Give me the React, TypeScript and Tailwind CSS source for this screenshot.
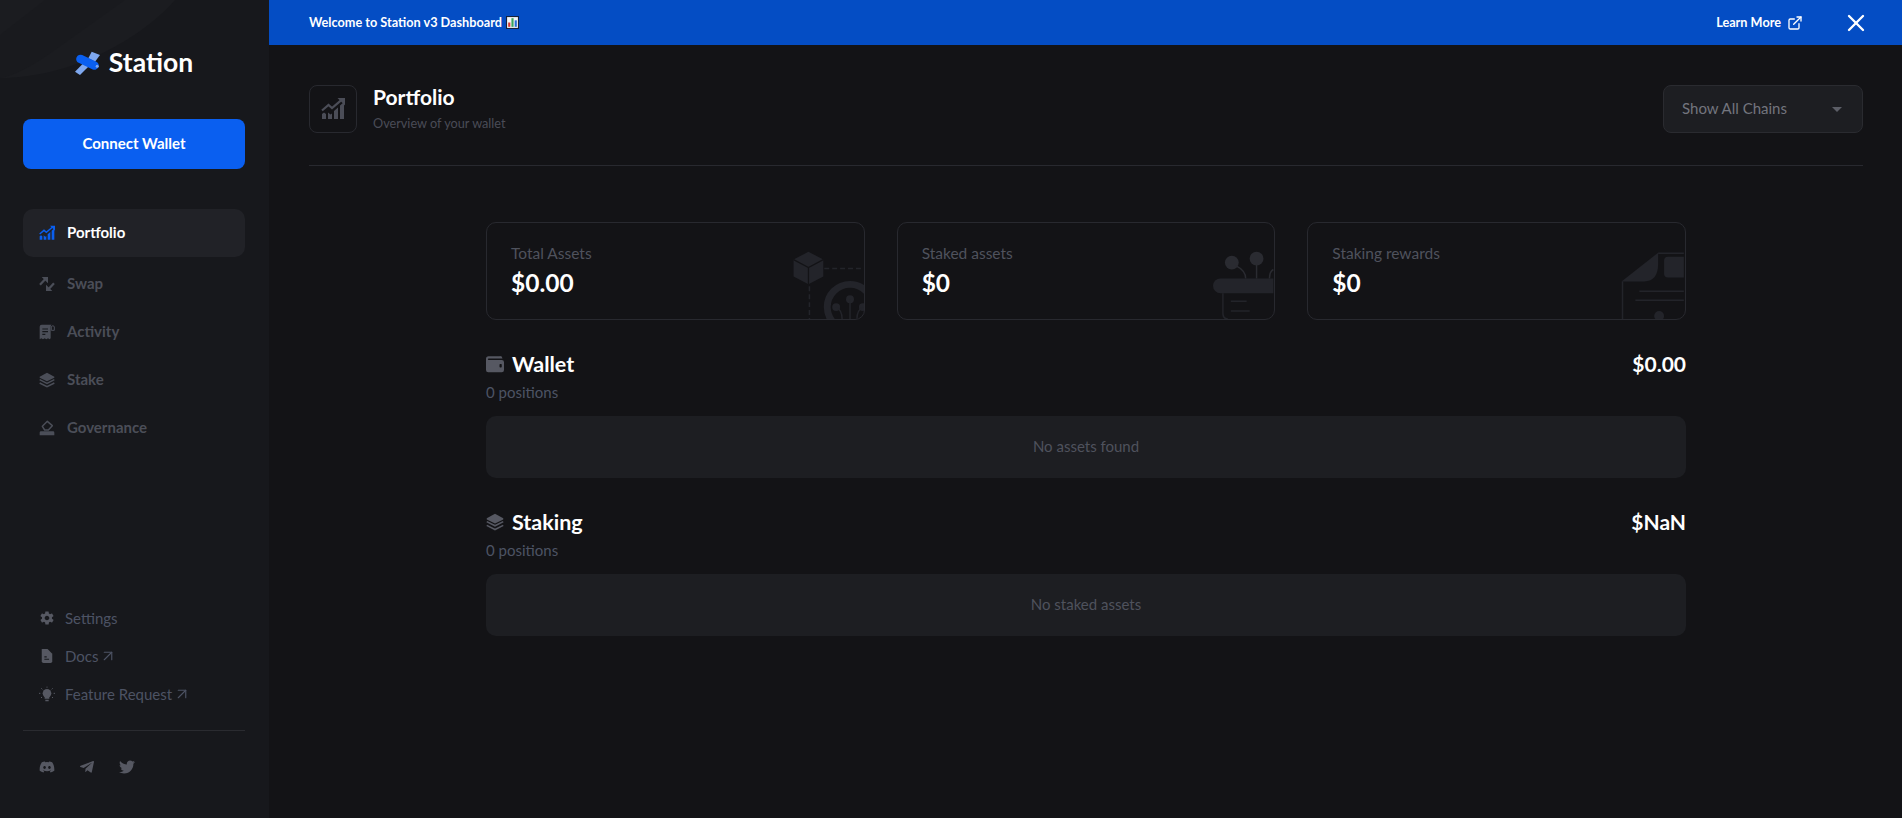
import { ArrowUpRight, ExternalLink, X } from 'lucide-react';
import { FaDiscord, FaTelegramPlane, FaTwitter } from 'react-icons/fa';
import { IoMdSettings } from 'react-icons/io';

const font = "font-['Lato','Liberation_Sans',sans-serif]";

function ChartIcon({ className }: { className?: string }) {
  return (
    <svg viewBox="0 0 24 24" className={className} fill="currentColor">
      <path d="M1 22v-5l2-1.500 2 1.500v5H1ZM7 22v-6.500l2.500 2 1.500-1V22H7ZM13 22v-8l4-3.500V22h-4ZM19 22V8.500l4-3.500v17h-4Z" />
      <path d="M1 13.500 7.500 8l3.500 3L20 3.300" fill="none" stroke="currentColor" strokeWidth="2.200" />
      <path d="M16.500 1H24v7.500Z" />
    </svg>
  );
}

function SwapIcon({ className }: { className?: string }) {
  return (
    <svg viewBox="0 0 24 24" className={className} fill="currentColor">
      <path d="M1.500 13 9.500 4.500M22.500 11 14.500 19.500" fill="none" stroke="currentColor" strokeWidth="3.400" />
      <path d="M4 1.500h9.500V11ZM10.500 13v9.500H20Z" />
    </svg>
  );
}

function ReceiptIcon({ className }: { className?: string }) {
  return (
    <svg viewBox="0 0 24 24" className={className} fill="currentColor">
      <path d="M1 4a3 3 0 0 1 3-3h15a3.500 3.500 0 0 0-1.500 3v17.500l-1.500 1.500-2.500-1.500-2.500 1.500-2.500-1.500L6 23l-2.500-1.500L1 23V4Z" />
      <path d="M5 7.500h8.500M5 11.500h8.500M5 15.500h4.500" stroke="#17181c" strokeWidth="1.800" />
      <path d="M18.500 9.500V4.500a2.300 2.300 0 0 1 4.500 0v5h-4.500Z" fill="none" stroke="currentColor" strokeWidth="1.500" />
    </svg>
  );
}

function LayersIcon({ className }: { className?: string }) {
  return (
    <svg viewBox="0 0 24 24" className={className} fill="currentColor">
      <path d="M12 1 23 7v1.500L12 14 1 8.500V7L12 1Z" />
      <path d="M1 11.500 12 17l11-5.500M1 16.500 12 22l11-5.500" fill="none" stroke="currentColor" strokeWidth="2.200" />
    </svg>
  );
}

function VoteIcon({ className }: { className?: string }) {
  return (
    <svg viewBox="0 0 24 24" className={className} fill="currentColor">
      <path d="M12.500 2 20 8.500 14 15H8.500L5 9.500Z" fill="none" stroke="currentColor" strokeWidth="2.200" strokeLinejoin="round" />
      <path d="M1 19a2 2 0 0 1 2-2h18a2 2 0 0 1 2 2v4H1v-4Z" />
    </svg>
  );
}

function DocIcon({ className }: { className?: string }) {
  return (
    <svg viewBox="0 0 24 24" className={className} fill="currentColor">
      <path d="M4 0h9l8 8v13a3 3 0 0 1-3 3H6a3 3 0 0 1-3-3V1a1 1 0 0 1 1-1Z" />
      <path d="M7.500 13.500h4M7.500 17.500h8" stroke="#17181c" strokeWidth="1.800" />
    </svg>
  );
}

function BulbIcon({ className }: { className?: string }) {
  return (
    <svg viewBox="0 0 24 24" className={className} fill="currentColor">
      <circle cx="12" cy="11" r="6.500" />
      <path d="M8.500 16h7v3h-7ZM9.500 20.500h5V23h-5Z" />
      <path d="M12 1v1.500M3.500 3.500l1.500 1.500M20.500 3.500 19 5M0 11h2M22 11h2M3 18l1.500-1.500M21 18l-1.500-1.500" stroke="currentColor" strokeWidth="1.500" fill="none" />
    </svg>
  );
}

function WalletIcon({ className }: { className?: string }) {
  return (
    <svg viewBox="0 0 24 24" className={className} fill="currentColor">
      <path d="M0 5a3.500 3.500 0 0 1 3.500-3.500h15A3.500 3.500 0 0 1 22 4.500H3.500a1 1 0 0 0 0 2H21a3 3 0 0 1 3 3V20a3 3 0 0 1-3 3H3a3 3 0 0 1-3-3V5Z" />
      <rect x="18" y="12" width="3" height="4.500" rx="1" fill="#131316" />
    </svg>
  );
}

function SatelliteLogo() {
  return (
    <svg viewBox="0 0 25 25" className="h-[25px] w-[25px]">
      <path d="M0 21.700 8.300 13.300l5 3.400L5 25Z" fill="#7fa8ef" />
      <path d="M16.700 1.700 25 5l-5 6.700-6.700-3.400Z" fill="#7fa8ef" />
      <rect x="0.500" y="8" width="24" height="8.500" rx="4.200" transform="rotate(25 12.500 12.200)" fill="#0a5ff0" />
      <circle cx="22.200" cy="16.300" r="1.500" fill="#7fa8ef" />
    </svg>
  );
}

function AssetsArt() {
  return (
    <svg viewBox="0 0 379 97" className="absolute inset-0 h-full w-full" fill="none">
      <path d="M324 29 339 37v17l-15 8-15-8V37Z" fill="#23242a" />
      <path d="M309 37l15 8 15-8M324 45v17" stroke="#131316" strokeWidth="1.200" />
      <path d="M340 46h39M325 64v33" stroke="#23242a" strokeWidth="1.500" strokeDasharray="5 3" />
      <circle cx="366" cy="85" r="23" stroke="#23242a" strokeWidth="7" />
      <circle cx="352" cy="85" r="4" fill="#23242a" />
      <circle cx="366" cy="77" r="4" fill="#23242a" />
      <circle cx="379" cy="85" r="4" fill="#23242a" />
      <path d="M352 85c4 2 6 5 6 12M366 77v20M379 85c-4 2-6 5-6 12" stroke="#23242a" strokeWidth="1.500" />
    </svg>
  );
}

function StakedArt() {
  return (
    <svg viewBox="0 0 378 97" className="absolute inset-0 h-full w-full" fill="none">
      <circle cx="336" cy="40" r="7" fill="#2a2b31" />
      <circle cx="361" cy="36" r="7" fill="#2a2b31" />
      <path d="M340 43c6 3 10 7 10 13M361 42v14M374 56c0-5 2-8 4-9" stroke="#2a2b31" strokeWidth="1.500" />
      <path d="M324.500 56H378v15h-53.500a7.500 7.500 0 0 1 0-15Z" fill="#23242a" />
      <path d="M327 71v20q0 6 5 6" stroke="#23242a" strokeWidth="1.500" />
      <path d="M335 79h16M335 89h19" stroke="#23242a" strokeWidth="1.500" />
    </svg>
  );
}

function RewardsArt() {
  return (
    <svg viewBox="0 0 379 97" className="absolute inset-0 h-full w-full" fill="none">
      <path d="M316 59 353 30v11q0 18-14 18Z" fill="#23242a" />
      <path d="M353 30.500h26M317 59v38" stroke="#23242a" strokeWidth="1.500" />
      <path d="M363 34h16v21h-16a4 4 0 0 1-4-4V38a4 4 0 0 1 4-4Z" fill="#23242a" />
      <path d="M334 69h45M330 78h49" stroke="#23242a" strokeWidth="1.500" />
      <circle cx="354" cy="94" r="5" fill="#23242a" />
    </svg>
  );
}

const navItems = [
  { label: 'Swap', icon: SwapIcon },
  { label: 'Activity', icon: ReceiptIcon },
  { label: 'Stake', icon: LayersIcon },
  { label: 'Governance', icon: VoteIcon },
];

function Sidebar() {
  return (
    <aside className="relative flex h-full w-[269px] shrink-0 flex-col overflow-hidden bg-[#17181c] pb-[43px] pl-[23px] pr-6 pt-[50px]">
      {/* faint background shape */}
      <svg viewBox="0 0 180 80" className="absolute left-0 top-0 h-[80px] w-[180px]" fill="none">
        <path d="M0 78C70 78 140 40 175 0H0Z" fill="#1b1c20" />
        <path d="M0 35 45 0H125L55 50Q20 75 0 78Z" fill="#191a1e" />
      </svg>

      <div className="relative flex h-[25px] items-center justify-center gap-[9px]">
        <SatelliteLogo />
        <span className="text-[26.500px] font-bold leading-none text-white">Station</span>
      </div>

      <button className="relative mt-[44px] h-[50px] rounded-lg bg-[#0a5ff0] pb-[2px] text-[15px] font-bold text-white">Connect Wallet</button>

      <nav className="mt-[40px] flex flex-col">
        <div className="mb-[3px] flex h-[48px] items-center gap-3 rounded-[10px] bg-[#212227] px-4">
          <ChartIcon className="h-4 w-4 text-[#0a5ff0]" />
          <span className="pb-[2px] text-[15px] font-bold text-white">Portfolio</span>
        </div>
        {navItems.map((item) => (
          <div key={item.label} className="flex h-[48px] items-center gap-3 px-4 text-[#4b4e58]">
            <item.icon className="h-4 w-4" />
            <span className="pb-[2px] text-[15px] font-bold">{item.label}</span>
          </div>
        ))}
      </nav>

      <div className="mt-auto flex flex-col px-4 text-[15px] text-[#4d5364]">
        <div className="flex h-[38px] items-center gap-[10px]">
          <IoMdSettings className="h-4 w-4 text-[#565862]" />
          <span>Settings</span>
        </div>
        <div className="flex h-[38px] items-center gap-[10px]">
          <DocIcon className="h-[14px] w-4 text-[#565862]" />
          <span>Docs</span>
          <ArrowUpRight className="-ml-[9px] h-[18px] w-[18px]" strokeWidth={1.500} />
        </div>
        <div className="flex h-[38px] items-center gap-[10px]">
          <BulbIcon className="h-4 w-4 text-[#565862]" />
          <span>Feature Request</span>
          <ArrowUpRight className="-ml-[9px] h-[18px] w-[18px]" strokeWidth={1.500} />
        </div>
      </div>

      <div className="mt-[17px] border-t border-[#2a2b30]" />

      <div className="mt-[28px] flex gap-6 px-4 text-[#565862]">
        <FaDiscord className="h-4 w-4" />
        <FaTelegramPlane className="h-4 w-4" />
        <FaTwitter className="h-4 w-4" />
      </div>
    </aside>
  );
}

function StatCard({ label, value, art }: { label: string; value: string; art: React.ReactNode }) {
  return (
    <div className="relative h-[98px] overflow-hidden rounded-[10px] border border-[#28292f] px-6 pt-5">
      {art}
      <div className="relative text-[15.500px] leading-5 text-[#4f525d]">{label}</div>
      <div className="relative mt-[5px] text-[24.500px] font-bold leading-[30px] text-white">{value}</div>
    </div>
  );
}

function Section({ title, total, empty, icon }: { title: string; total: string; empty: string; icon: React.ReactNode }) {
  return (
    <section>
      <div className="flex h-[28px] items-center justify-between">
        <div className="flex items-center gap-2">
          {icon}
          <h2 className="text-[21.500px] font-bold leading-7 text-white">{title}</h2>
        </div>
        <span className="text-[21px] font-bold leading-7 text-white">{total}</span>
      </div>
      <p className="mt-1 text-[15px] leading-5 text-[#4d5364]">0 positions</p>
      <div className="mt-[14px] flex h-[62px] items-center justify-center rounded-[10px] bg-[#1d1e22] pb-[2px] text-[15px] text-[#4f525d]">{empty}</div>
    </section>
  );
}

export default function App() {
  return (
    <div className={`flex h-screen overflow-hidden bg-[#131316] ${font}`}>
      <Sidebar />
      <main className="min-w-0 flex-1">
        <div className="flex h-[45px] items-center justify-between bg-[#044dc4] pl-10 pr-[39px] text-white">
          <div className="flex items-center gap-[4px] text-[12.700px] font-bold">
            <span>Welcome to Station v3 Dashboard</span>
            <svg viewBox="0 0 12 12" className="h-[13px] w-[13px]">
              <rect width="12" height="12" fill="#16223a" />
              <rect x="1" y="1" width="10" height="10" fill="#f2f5f8" />
              <rect x="2" y="6" width="2" height="4" fill="#d8392f" />
              <rect x="5" y="2" width="2" height="8" fill="#3ba55d" />
              <rect x="8" y="4" width="2" height="6" fill="#2a6fd6" />
            </svg>
          </div>
          <div className="flex items-center">
            <span className="text-[12.700px] font-bold">Learn More</span>
            <ExternalLink className="ml-[6px] h-4 w-4" strokeWidth={2} />
            <X className="-mr-[7px] ml-[39px] h-7 w-7" strokeWidth={2} />
          </div>
        </div>

        <div className="pl-10 pr-[39px]">
          <header className="flex items-center justify-between border-b border-[#28292f] pb-8 pt-10">
            <div className="flex items-center gap-4">
              <div className="flex h-12 w-12 items-center justify-center rounded-lg border border-[#28292f]">
                <ChartIcon className="h-6 w-6 text-[#4b4d57]" />
              </div>
              <div className="-mt-[2px]">
                <h1 className="text-[21px] font-bold leading-6 text-white">Portfolio</h1>
                <p className="mt-[6px] text-[12.700px] leading-4 text-[#4a4c56]">Overview of your wallet</p>
              </div>
            </div>
            <div className="flex h-12 w-[200px] items-center justify-between rounded-lg border border-[#2a2b30] bg-[#1d1e22] pl-[18px] pr-5 text-[15px] text-[#73757e]">
              <span className="-mt-[2px]">Show All Chains</span>
              <span className="h-0 w-0 border-x-[5px] border-t-[5px] border-x-transparent border-t-[#5c5e67]" />
            </div>
          </header>

          <div className="mx-auto mt-14 w-[1200px]">
            <div className="grid grid-cols-3 gap-8">
              <StatCard label="Total Assets" value="$0.00" art={<AssetsArt />} />
              <StatCard label="Staked assets" value="$0" art={<StakedArt />} />
              <StatCard label="Staking rewards" value="$0" art={<RewardsArt />} />
            </div>
            <div className="mt-[30px] flex flex-col gap-[30px]">
              <Section title="Wallet" total="$0.00" empty="No assets found" icon={<WalletIcon className="h-[18px] w-[18px] text-[#565862]" />} />
              <Section title="Staking" total="$NaN" empty="No staked assets" icon={<LayersIcon className="h-[18px] w-[18px] text-[#565862]" />} />
            </div>
          </div>
        </div>
      </main>
    </div>
  );
}
